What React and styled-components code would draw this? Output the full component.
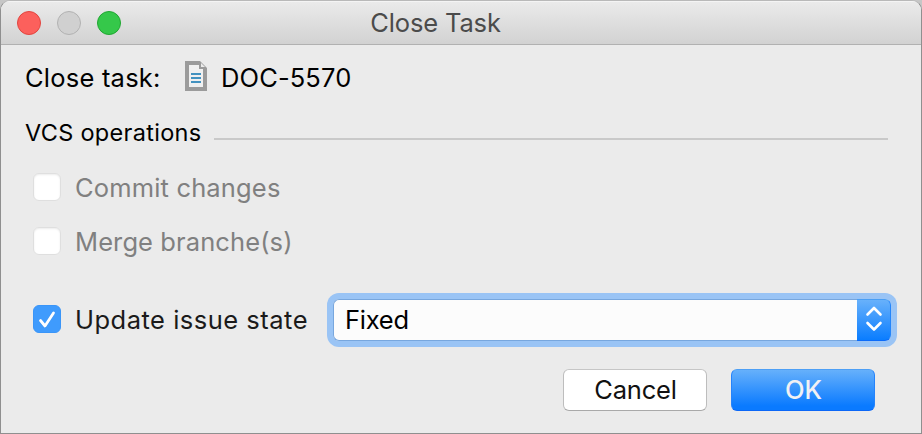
import React from "react";
import styled, { createGlobalStyle } from "styled-components";

const GlobalStyle = createGlobalStyle`
  * { box-sizing: border-box; }
  body { margin: 0; background: #c6c6c6; }
`;

const Dialog = styled.main`
  display: flex;
  flex-direction: column;
  width: 922px;
  height: 434px;
  border: 1px solid #8f8f8f;
  border-top-color: #b9b9b9;
  border-radius: 10px 10px 0 0;
  background: #ebebeb;
  overflow: hidden;
  font-family: Inter, "Liberation Sans", sans-serif;
  font-weight: 400;
  color: #000;
`;

const TitleBar = styled.header`
  display: grid;
  grid-template-columns: 1fr auto 1fr;
  align-items: center;
  height: 44px;
  flex: none;
  padding: 0 67px 0 16px;
  border-bottom: 1px solid #b1b1b1;
  background: linear-gradient(#ebebeb, #d2d2d2);
  box-shadow: inset 0 1px #f4f4f4;
`;

const Lights = styled.div`
  display: flex;
  gap: 16px;
`;

const Light = styled.span`
  width: 24px;
  height: 24px;
  border-radius: 50%;
  background: ${(p) => p.$fill};
  border: 1px solid ${(p) => p.$edge};
`;

const Text = styled.span`
  flex: none;
  white-space: nowrap;
  line-height: 32px;
  font-size: ${(p) => p.$size || 25.5}px;
  letter-spacing: ${(p) => p.$track || 0}px;
  color: ${(p) => p.$color || "inherit"};
  padding-top: ${(p) => p.$drop || 0}px;
`;

const Body = styled.div`
  display: flex;
  flex-direction: column;
  padding: 0 25px 0 24px;
`;

const TaskRow = styled.div`
  display: flex;
  align-items: center;
  height: 62px;
  padding-top: 3px;
`;

const TaskLabel = styled.div`
  width: 160px;
`;

const DocIcon = styled.svg`
  width: 22px;
  height: 30px;
  margin: -3px 14px 0 0;
`;

const SectionRow = styled.div`
  display: flex;
  align-items: center;
  height: 51px;
`;

const SectionTitle = styled.div`
  width: 189px;
`;

const Rule = styled.div`
  flex: 1;
  height: 2px;
  margin: 12px 8px 0 0;
  background: #c9c9c9;
`;

const CheckRow = styled.label`
  display: flex;
  align-items: center;
  gap: 14px;
  height: 54px;
  padding-left: 8px;
  margin-top: ${(p) => p.$gap || 0}px;
`;

const Box = styled.span`
  display: grid;
  place-items: center;
  flex: none;
  width: 28px;
  height: 28px;
  margin-bottom: ${(p) => (p.$on ? 2 : 0)}px;
  border-radius: 6px;
  border: 1px solid ${(p) => (p.$on ? "#3a95f8" : "#dfdfdf")};
  background: ${(p) => (p.$on ? "#3f9bfd" : "#fff")};
  box-shadow: ${(p) => (p.$on ? "none" : "inset 0 1px 2px #ececec")};
`;

const StateLabel = styled.div`
  width: 244px;
`;

const Combo = styled.div`
  display: flex;
  flex: none;
  width: 558px;
  height: 42px;
  border-radius: 6px;
  box-shadow: 0 0 0 6px #9ac4f5;
`;

const ComboValue = styled.div`
  display: flex;
  align-items: center;
  flex: 1;
  padding-left: 11px;
  border: 1px solid #78a7de;
  border-right: 0;
  border-radius: 6px 0 0 6px;
  background: #fcfcfc;
`;

const ComboArrows = styled.div`
  display: grid;
  place-items: center;
  width: 34px;
  padding-bottom: 2px;
  border: 1px solid;
  border-width: 1px 1px 1px 0;
  border-color: #4a9ff5 #2385fb #0b6bfa;
  border-radius: 0 6px 6px 0;
  background: linear-gradient(#68b1fb, #0a7dff);
`;

const Actions = styled.footer`
  display: flex;
  justify-content: flex-end;
  gap: 24px;
  padding-right: 21px;
  margin-top: 22px;
`;

const Button = styled.button`
  display: flex;
  align-items: center;
  justify-content: center;
  width: 144px;
  height: 42px;
  padding: 0 0 0 1px;
  font-family: inherit;
  font-weight: ${(p) => (p.$primary ? 500 : 400)};
  border-radius: 6px;
  border: 1px solid;
  border-color: ${(p) => (p.$primary ? "#4d9ff5 #2583fb #0b67f7" : "#c6c6c6 #bdbdbd #a9a9a9")};
  background: ${(p) => (p.$primary ? "linear-gradient(#66b0fb, #0a7aff 90%)" : "#fff")};
  color: ${(p) => (p.$primary ? "#f1f1f4" : "#111")};
`;

export default function App() {
  return (
    <>
      <GlobalStyle />
      <Dialog>
        <TitleBar>
          <Lights>
            <Light $fill="#fc605c" $edge="#e2453f" />
            <Light $fill="#d0d0d0" $edge="#b2b2b2" />
            <Light $fill="#35c84a" $edge="#21a732" />
          </Lights>
          <Text $color="#4b4b4b" $track={-0.15}>Close Task</Text>
        </TitleBar>
        <Body>
          <TaskRow>
            <TaskLabel><Text $track={0.22}>Close task:</Text></TaskLabel>
            <DocIcon viewBox="0 0 22 30">
              <path d="M0 0H15L22 7V30H0Z" fill="#9b9b9b" />
              <path d="M4 4H14V8H18V26H4Z" fill="#f0f0f0" />
              <path d="M16 2V6H20Z" fill="#ebebeb" />
              <path d="M6 12h10v2H6zM6 16h10v2H6zM6 20h10v2H6z" fill="#4392c0" />
            </DocIcon>
            <Text $track={0.12}>DOC-5570</Text>
          </TaskRow>
          <SectionRow>
            <SectionTitle><Text $size={23.5} $track={0.3}>VCS operations</Text></SectionTitle>
            <Rule />
          </SectionRow>
          <CheckRow $gap={2}>
            <Box />
            <Text $color="#808080" $track={0.16} $drop={2}>Commit changes</Text>
          </CheckRow>
          <CheckRow>
            <Box />
            <Text $color="#808080" $track={0.1} $drop={2}>Merge branche(s)</Text>
          </CheckRow>
          <CheckRow $gap={25}>
            <Box $on>
              <svg width="26" height="26" viewBox="0 0 26 26" fill="none">
                <path d="M6.5 15L11 20.5L19.5 7" stroke="#2876c8" strokeOpacity=".35" strokeWidth="3" strokeLinecap="round" strokeLinejoin="round" />
                <path d="M6.5 14.5L11 20L19.5 7" stroke="#fff" strokeWidth="2.8" strokeLinecap="round" strokeLinejoin="round" />
              </svg>
            </Box>
            <StateLabel><Text $color="#1a1a1a" $track={0.5}>Update issue state</Text></StateLabel>
            <Combo>
              <ComboValue><Text $track={-0.25}>Fixed</Text></ComboValue>
              <ComboArrows>
                <svg width="18" height="26" viewBox="0 0 18 26" fill="none" stroke="#fff" strokeWidth="2.6" strokeLinecap="round" strokeLinejoin="round">
                  <path d="M2.5 8.5L9 2L15.5 8.5M2.5 17L9 23.5L15.5 17" />
                </svg>
              </ComboArrows>
            </Combo>
          </CheckRow>
          <Actions>
            <Button><Text $track={-0.2}>Cancel</Text></Button>
            <Button $primary><Text>OK</Text></Button>
          </Actions>
        </Body>
      </Dialog>
    </>
  );
}
